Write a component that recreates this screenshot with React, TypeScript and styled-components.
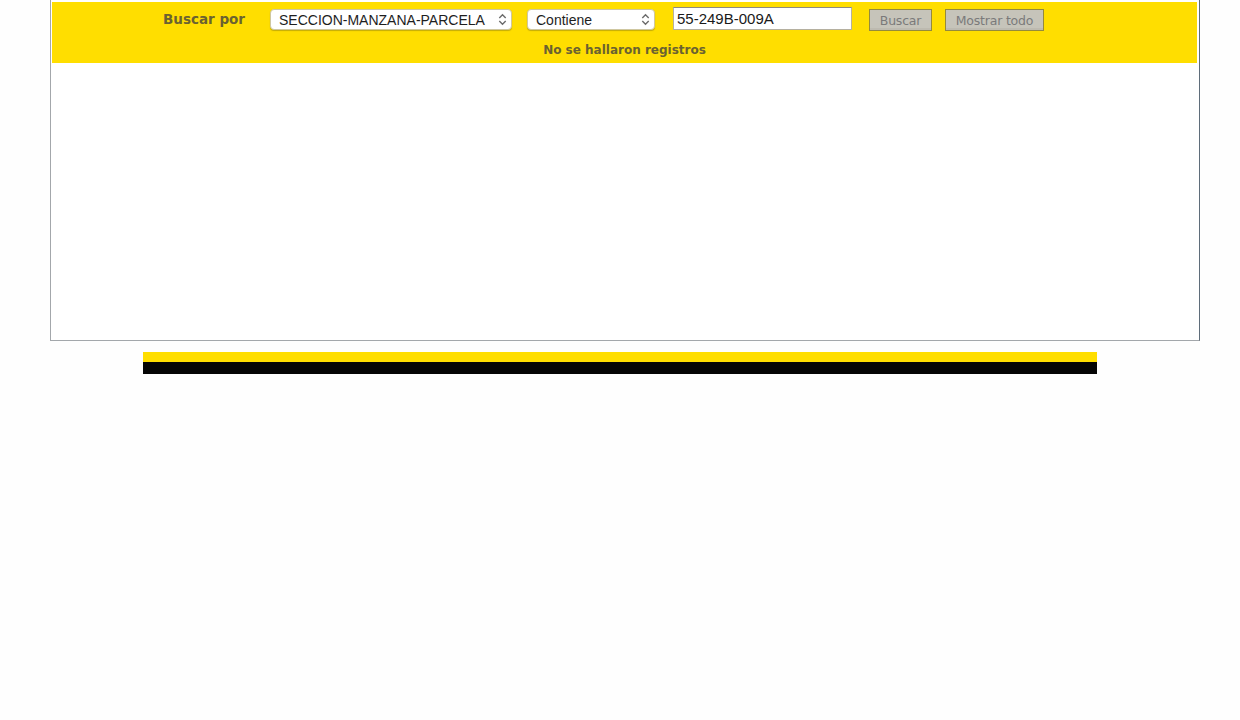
import React from "react";
import styled, { createGlobalStyle } from "styled-components";

const GlobalStyle = createGlobalStyle`
  html, body {
    margin: 0;
    padding: 0;
    background: #fefefe;
  }
`;

const App = () => {
  return (
    <>
      <GlobalStyle />
      <Page>
        <Frame>
          <SearchBand>
            <SearchRow>
              <Label>Buscar por</Label>
              <SelectBox width={242} gap={15}>
                <select defaultValue="smp">
                  <option value="smp">SECCION-MANZANA-PARCELA</option>
                </select>
                <Chevrons />
              </SelectBox>
              <SelectBox width={128} gap={18}>
                <select defaultValue="contiene">
                  <option value="contiene">Contiene</option>
                </select>
                <Chevrons />
              </SelectBox>
              <SearchInput type="text" defaultValue="55-249B-009A" />
              <FlatButton width={63} disabled>
                Buscar
              </FlatButton>
              <FlatButton width={99} disabled>
                Mostrar todo
              </FlatButton>
            </SearchRow>
            <Message>No se hallaron registros</Message>
          </SearchBand>
          <Results />
        </Frame>
        <FooterStripe>
          <div className="yellow" />
          <div className="black" />
        </FooterStripe>
      </Page>
    </>
  );
};

const Chevrons = () => (
  <svg width="9" height="13" viewBox="0 0 9 13" fill="none">
    <path d="M1.3 5 L4.5 1.8 L7.7 5" stroke="#6b6b6b" strokeWidth="1.4" />
    <path d="M1.3 8 L4.5 11.2 L7.7 8" stroke="#6b6b6b" strokeWidth="1.4" />
  </svg>
);

const Page = styled.div`
  width: 1240px;
  display: flex;
  flex-direction: column;
  align-items: center;
  font-family: "DejaVu Sans", Verdana, sans-serif;
`;

const Frame = styled.div`
  width: 1145px;
  margin-left: 10px;
  padding: 2px 2px 0 1px;
  border: 1px solid #a3a7ab;
  border-top: none;
  border-right-color: #5f6d7a;
  background: #fff;
`;

const SearchBand = styled.div`
  height: 61px;
  background: #ffde00;
  display: flex;
  flex-direction: column;
`;

const SearchRow = styled.div`
  display: flex;
  align-items: flex-start;
  height: 34px;
  padding-left: 111px;
  box-sizing: border-box;
`;

const Label = styled.span`
  font-weight: bold;
  font-size: 13.5px;
  line-height: 16px;
  margin-top: 9px;
  color: #6a6231;
  width: 107px;
`;

const SelectBox = styled.div<{ width: number; gap: number }>`
  position: relative;
  width: ${(p) => p.width}px;
  height: 21px;
  margin-right: ${(p) => p.gap}px;
  margin-top: 7px;

  select {
    appearance: none;
    -webkit-appearance: none;
    width: 100%;
    height: 100%;
    border: 1px solid #cfc7a0;
    border-radius: 4px;
    background: #fff;
    box-shadow: 0 1px 1px rgba(90, 80, 20, 0.35);
    padding: 0 0 0 8px;
    font-family: "Liberation Sans", Arial, sans-serif;
    font-size: 14px;
    color: #1e1e1e;
    outline: none;
  }

  svg {
    position: absolute;
    right: 5px;
    top: 4px;
    pointer-events: none;
  }
`;

const SearchInput = styled.input`
  width: 179px;
  height: 23px;
  box-sizing: border-box;
  margin-top: 5px;
  margin-right: 17px;
  border: 1px solid #b5b0a0;
  border-top-color: #8f8b7e;
  background: #fff;
  padding: 0 3px;
  font-family: "Liberation Sans", Arial, sans-serif;
  font-size: 15px;
  color: #1a1a1a;
  outline: none;
`;

const FlatButton = styled.button<{ width: number }>`
  width: ${(p) => p.width}px;
  height: 22px;
  margin-top: 7px;
  margin-right: 13px;
  padding: 0;
  border: 1px solid #958a3c;
  background: #c6c4ba;
  box-shadow: inset 0 -2px 0 #bdbab0;
  font-family: "DejaVu Sans", Verdana, sans-serif;
  font-size: 12.5px;
  color: #7a7a7a;
  letter-spacing: -0.2px;
`;

const Message = styled.div`
  text-align: center;
  font-weight: bold;
  font-size: 12px;
  color: #6a6231;
  padding-top: 7px;
`;

const Results = styled.div`
  height: 277px;
  background: #fff;
`;

const FooterStripe = styled.div`
  width: 954px;
  margin-top: 11px;

  .yellow {
    height: 10px;
    background: #ffde00;
  }
  .black {
    height: 12px;
    background: #050505;
  }
`;

export default App;
